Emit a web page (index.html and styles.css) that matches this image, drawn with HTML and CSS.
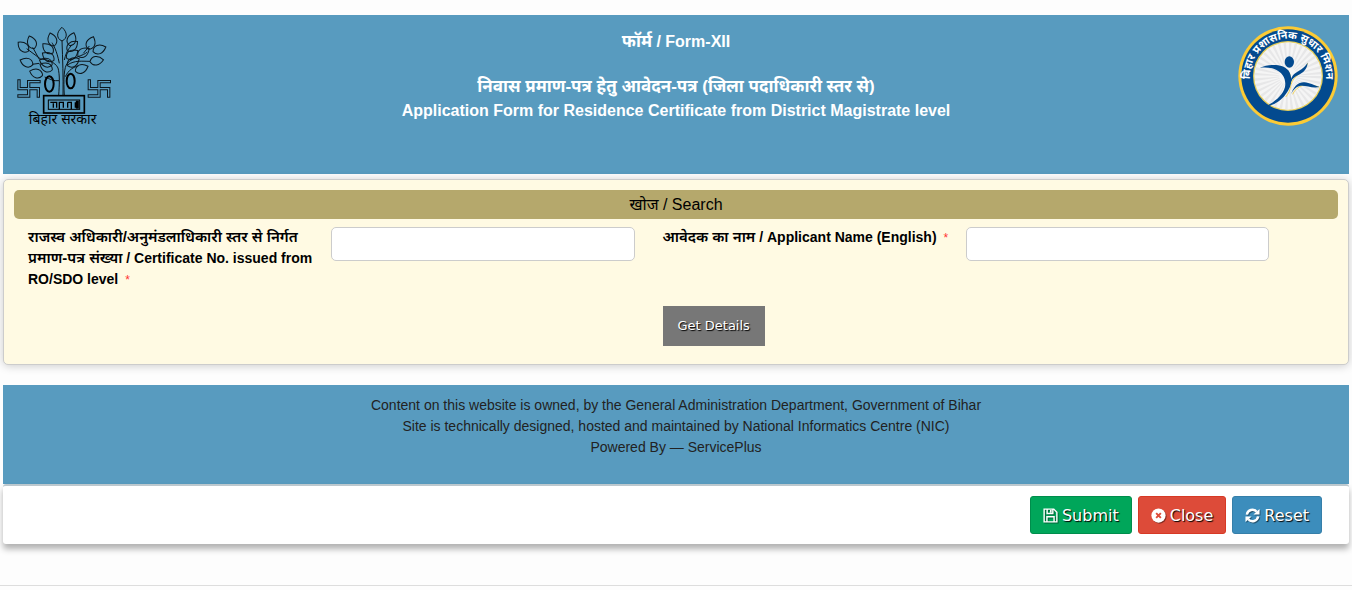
FILE: index.html
```html
<!DOCTYPE html>
<html lang="en">
<head>
    <meta charset="UTF-8">
    <meta name="viewport" content="width=device-width, initial-scale=1.0">
    <title>Application Form for Residence Certificate</title>
    <link rel="stylesheet" href="styles.css">
</head>
<body>
    <form class="page">
        <header class="header">
            <svg class="logo" viewBox="42 48 300 300" role="img" aria-label="Government of Bihar">
                <defs>
                    <path id="leaf" d="M0 0C-17 -7 -18 -26 0 -41C17 -26 17 -8 0 0"/>
                </defs>
                <g fill="none" stroke="#0c161c" stroke-width="3">
                    <path d="M176 257C178 225 180 195 174 174C165 155 140 148 121 147M193 257C190 210 192 170 202 160C220 140 250 138 262 126M189 257C190 200 188 150 186 92M178 212C160 214 150 207 134 201M196 200C205 180 222 170 235 168M178 160C170 120 160 105 156 98M202 165C225 150 245 154 270 154M193 150C200 120 208 115 216 104M118 148L98 112M122 147L80 116M96 163L118 160M250 130L268 108"/>
                    <use href="#leaf" transform="translate(186 93)"/>
                    <use href="#leaf" transform="translate(163 108) rotate(-18)"/>
                    <use href="#leaf" transform="translate(209 107) rotate(18)"/>
                    <use href="#leaf" transform="translate(159 129) rotate(-48)"/>
                    <use href="#leaf" transform="translate(202 122) rotate(48)"/>
                    <use href="#leaf" transform="translate(162 151) rotate(-58)"/>
                    <use href="#leaf" transform="translate(200 145) rotate(55)"/>
                    <use href="#leaf" transform="translate(157 164) rotate(-70)"/>
                    <use href="#leaf" transform="translate(202 167) rotate(60)"/>
                    <use href="#leaf" transform="translate(103 116) rotate(-22)"/>
                    <use href="#leaf" transform="translate(85 124) rotate(-48)"/>
                    <use href="#leaf" transform="translate(99 164) rotate(-70)"/>
                    <use href="#leaf" transform="translate(128 196) rotate(-72)"/>
                    <use href="#leaf" transform="translate(157 180) rotate(-65)"/>
                    <use href="#leaf" transform="translate(265 118) rotate(22)"/>
                    <use href="#leaf" transform="translate(279 125) rotate(70)"/>
                    <use href="#leaf" transform="translate(234 139) rotate(55)"/>
                    <use href="#leaf" transform="translate(270 155) rotate(82)"/>
                    <use href="#leaf" transform="translate(226 184) rotate(68)"/>
                </g>
                <g fill="none" stroke="#000">
                    <ellipse cx="148" cy="222" rx="13" ry="23" stroke-width="6"/>
                    <ellipse cx="212" cy="213" rx="12" ry="22" stroke-width="6"/>
                    <rect x="131" y="257" width="122" height="52" stroke-width="5"/>
                    <rect x="145" y="270" width="94" height="28" stroke-width="3"/>
                    <path d="M151 277H170V293M160 280V293M178 298V277H190V293M203 277V293M203 277H214V298M226 277V293" stroke-width="4"/>
                    <path d="M232 272V296" stroke-width="9"/>
                </g>
                <g fill="none">
                    <path d="M57 213V236H115V258M86 258V215H117M86 258H57" stroke="#0c161c" stroke-width="10" stroke-linecap="square"/>
                    <path d="M57 213V236H115V258M86 258V215H117M86 258H57" stroke="#589bbf" stroke-width="4" stroke-linecap="square"/>
                    <path d="M268 213V236H326V258M297 258V215H328M297 258H268" stroke="#0c161c" stroke-width="10" stroke-linecap="square"/>
                    <path d="M268 213V236H326V258M297 258V215H328M297 258H268" stroke="#589bbf" stroke-width="4" stroke-linecap="square"/>
                </g>
                <text class="emblem-text" x="188" y="341">बिहार सरकार</text>
            </svg>

            <h1 class="title">
                <span><span class="hindi">फॉर्म</span> / Form-XII</span>
                <span class="title-hindi hindi">निवास प्रमाण-पत्र हेतु आवेदन-पत्र (जिला पदाधिकारी स्तर से)</span>
                <span>Application Form for Residence Certificate from District Magistrate level</span>
            </h1>

            <svg class="logo" viewBox="39 48 300 300" role="img" aria-label="Bihar Prashasnik Sudhar Mission">
                <defs>
                    <path id="arc" d="M79 230A114 114 0 1 1 299 230"/>
                </defs>
                <circle cx="189" cy="198" r="149" fill="#fccb35"/>
                <circle cx="189" cy="198" r="140" fill="#034a8f"/>
                <circle cx="189" cy="198" r="105" fill="#e6cf5c"/>
                <circle cx="189" cy="198" r="101" fill="#f5f5f5"/>
                <circle cx="189" cy="198" r="63" fill="none" stroke="#e7e7e8" stroke-width="74" stroke-dasharray="5 6"/>
                <path d="M199 222C203 199 240 184 248 160M203 253C216 224 244 219 282 231M182 261C199 242 203 212 193 188" fill="none" stroke="#f3d45d" stroke-width="3"/>
                <g fill="#034a8f">
                    <ellipse cx="193" cy="156" rx="14" ry="17"/>
                    <path d="M104 173C137 160 175 162 190 181C205 204 200 230 182 253C165 277 140 288 119 290C145 279 174 257 180 231C184 207 174 189 153 179C136 171 119 172 104 173Z"/>
                    <path d="M196 222C197 197 208 191 221 183C233 175 242 168 248 158C246 184 228 190 213 199C204 204 199 211 196 222Z"/>
                    <path d="M198 253C207 228 220 216 238 217C255 218 265 226 284 231C259 236 240 224 224 228C212 231 204 240 198 253Z"/>
                </g>
                <text class="seal-text"><textPath href="#arc" startOffset="50%">बिहार प्रशासनिक सुधार मिशन</textPath></text>
            </svg>
        </header>

        <section class="panel">
            <h2 class="panel-title">खोज / Search</h2>
            <div class="fields">
                <div class="field">
                    <label for="certNo"><span class="hindi">राजस्व अधिकारी/अनुमंडलाधिकारी स्तर से निर्गत प्रमाण-पत्र संख्या</span> / Certificate No. issued from RO/SDO level <span class="required">*</span></label>
                    <input type="text" id="certNo" required>
                </div>
                <div class="field">
                    <label for="applicantName"><span class="hindi">आवेदक का नाम</span> / Applicant Name (English) <span class="required">*</span></label>
                    <input type="text" id="applicantName" required>
                </div>
                <div class="details">
                    <button type="button" class="btn-details">Get Details</button>
                </div>
            </div>
        </section>

        <footer class="footer">
            <p>Content on this website is owned, by the General Administration Department, Government of Bihar</p>
            <p>Site is technically designed, hosted and maintained by National Informatics Centre (NIC)</p>
            <p>Powered By — ServicePlus</p>
        </footer>

        <div class="actions">
            <button type="submit" class="btn btn-submit">
                <svg class="icon" viewBox="0 0 16 16" aria-hidden="true"><path fill="none" stroke="#fff" stroke-width="1.5" d="M1.2 1.2H11.5L14.8 4.5V14.8H1.2ZM4.4 1.7V5.8H10.5V1.7M4.2 14.3V9.3H11.8V14.3"/><path fill="#fff" d="M7.5 2H9.2V5H7.5Z"/></svg>
                Submit
            </button>
            <button type="button" class="btn btn-close">
                <svg class="icon" viewBox="0 0 16 16" aria-hidden="true"><circle cx="8" cy="8" r="7.6" fill="#fff"/><path d="M5.5 5.5L10.5 10.5M10.5 5.5L5.5 10.5" stroke="#dd4b39" stroke-width="2.1"/></svg>
                Close
            </button>
            <button type="reset" class="btn btn-reset">
                <svg class="icon" viewBox="0 0 16 16" aria-hidden="true"><path d="M2 7A6 6 0 0 1 12.5 4M14 9A6 6 0 0 1 3.5 12" fill="none" stroke="#fff" stroke-width="2.6"/><path d="M15.5 1V7H9ZM.5 15V9H7Z" fill="#fff"/></svg>
                Reset
            </button>
        </div>
    </form>
    <hr class="divider">
</body>
</html>
```

FILE: styles.css
```css
* {
    box-sizing: border-box;
}
body {
    margin: 0;
    background-color: #fdfdfd;
    font-family: "Liberation Sans", Arial, "Noto Sans", "Noto Sans Devanagari", sans-serif;
    font-size: 14px;
    line-height: 21px;
    color: #000;
}
.page {
    padding: 15px 3px 0;
}
.header {
    display: flex;
    justify-content: space-between;
    align-items: flex-start;
    min-height: 159px;
    padding: 11px;
    background-color: #589bbf;
    color: #fff;
}
.logo {
    flex: none;
    width: 100px;
    height: 100px;
}
.emblem-text {
    font-size: 42px;
    text-anchor: middle;
    fill: #000;
}
.seal-text {
    font-size: 32px;
    font-weight: bold;
    text-anchor: middle;
    fill: #fff;
}
.title {
    display: flex;
    flex-direction: column;
    margin: 4px 0 0;
    font-size: 16px;
    line-height: 24px;
    text-align: center;
}
.title .hindi {
    font-size: 17px;
}
.title-hindi {
    margin-top: 21px;
}
.panel {
    margin-top: 5px;
    padding: 10px 10px 18px;
    background-color: #fffae3;
    border: 1px solid #ccc;
    border-radius: 5px;
    box-shadow: 0 1px 10px rgba(0,0,0,0.2);
}
.panel-title {
    margin: 0;
    border-radius: 5px;
    background-color: #b5a86c;
    font-size: 16px;
    font-weight: normal;
    line-height: 29px;
    text-align: center;
}
.fields {
    display: grid;
    grid-template-columns: 1fr 1fr;
    gap: 16px 28px;
    padding: 8px 69px 0 14px;
}
.field {
    display: grid;
    grid-template-columns: 1fr 1fr;
    align-items: start;
}
.field label {
    padding-right: 15px;
    font-weight: bold;
}
.field .hindi {
    font-size: 15px;
    font-weight: 600;
    line-height: 16px;
}
.field input {
    width: 100%;
    height: 34px;
    padding: 6px 12px;
    border: 1px solid #ccc;
    border-radius: 5px;
    background-color: #fff;
    font-size: 14px;
}
.required {
    margin-left: 3px;
    color: #f33;
    font-size: 12px;
    font-weight: normal;
    line-height: 12px;
}
.details {
    grid-column: 2;
}
.btn-details {
    display: block;
    padding: 0 15px 2px;
    height: 40px;
    border: none;
    background-color: #777;
    color: #fff;
    font-family: Verdana, "DejaVu Sans", sans-serif;
    font-size: 13px;
    text-shadow: 1px 1px 1px #000;
    cursor: pointer;
}
.footer {
    margin-top: 20px;
    padding: 10px 0 26px;
    background-color: #589bbf;
    color: #222;
    text-align: center;
}
.footer p {
    margin: 0;
}
.actions {
    display: flex;
    justify-content: flex-end;
    gap: 6px;
    padding: 10px 27px;
    border-top: 2px solid #bcc8ce;
    border-radius: 3px;
    background-color: #fff;
    box-shadow: 0 5px 6px rgba(0,0,0,0.3);
}
.btn {
    display: flex;
    align-items: center;
    gap: 4px;
    height: 38px;
    padding: 0 12px;
    border: 1px solid;
    border-radius: 3px;
    color: #fff;
    font-family: Verdana, "DejaVu Sans", sans-serif;
    font-size: 16px;
    text-shadow: 1px 1px 1px #000;
    cursor: pointer;
}
.icon {
    width: 15px;
    height: 15px;
    filter: drop-shadow(1px 1px 0 rgba(0,0,0,0.4));
}
.btn-submit {
    background-color: #00a65a;
    border-color: #008d4c;
}
.btn-close {
    background-color: #dd4b39;
    border-color: #d73925;
}
.btn-reset {
    background-color: #3c8dbc;
    border-color: #367fa9;
}
.divider {
    margin: 41px 0 0;
    border: none;
    border-top: 1px solid #ddd;
}
```
